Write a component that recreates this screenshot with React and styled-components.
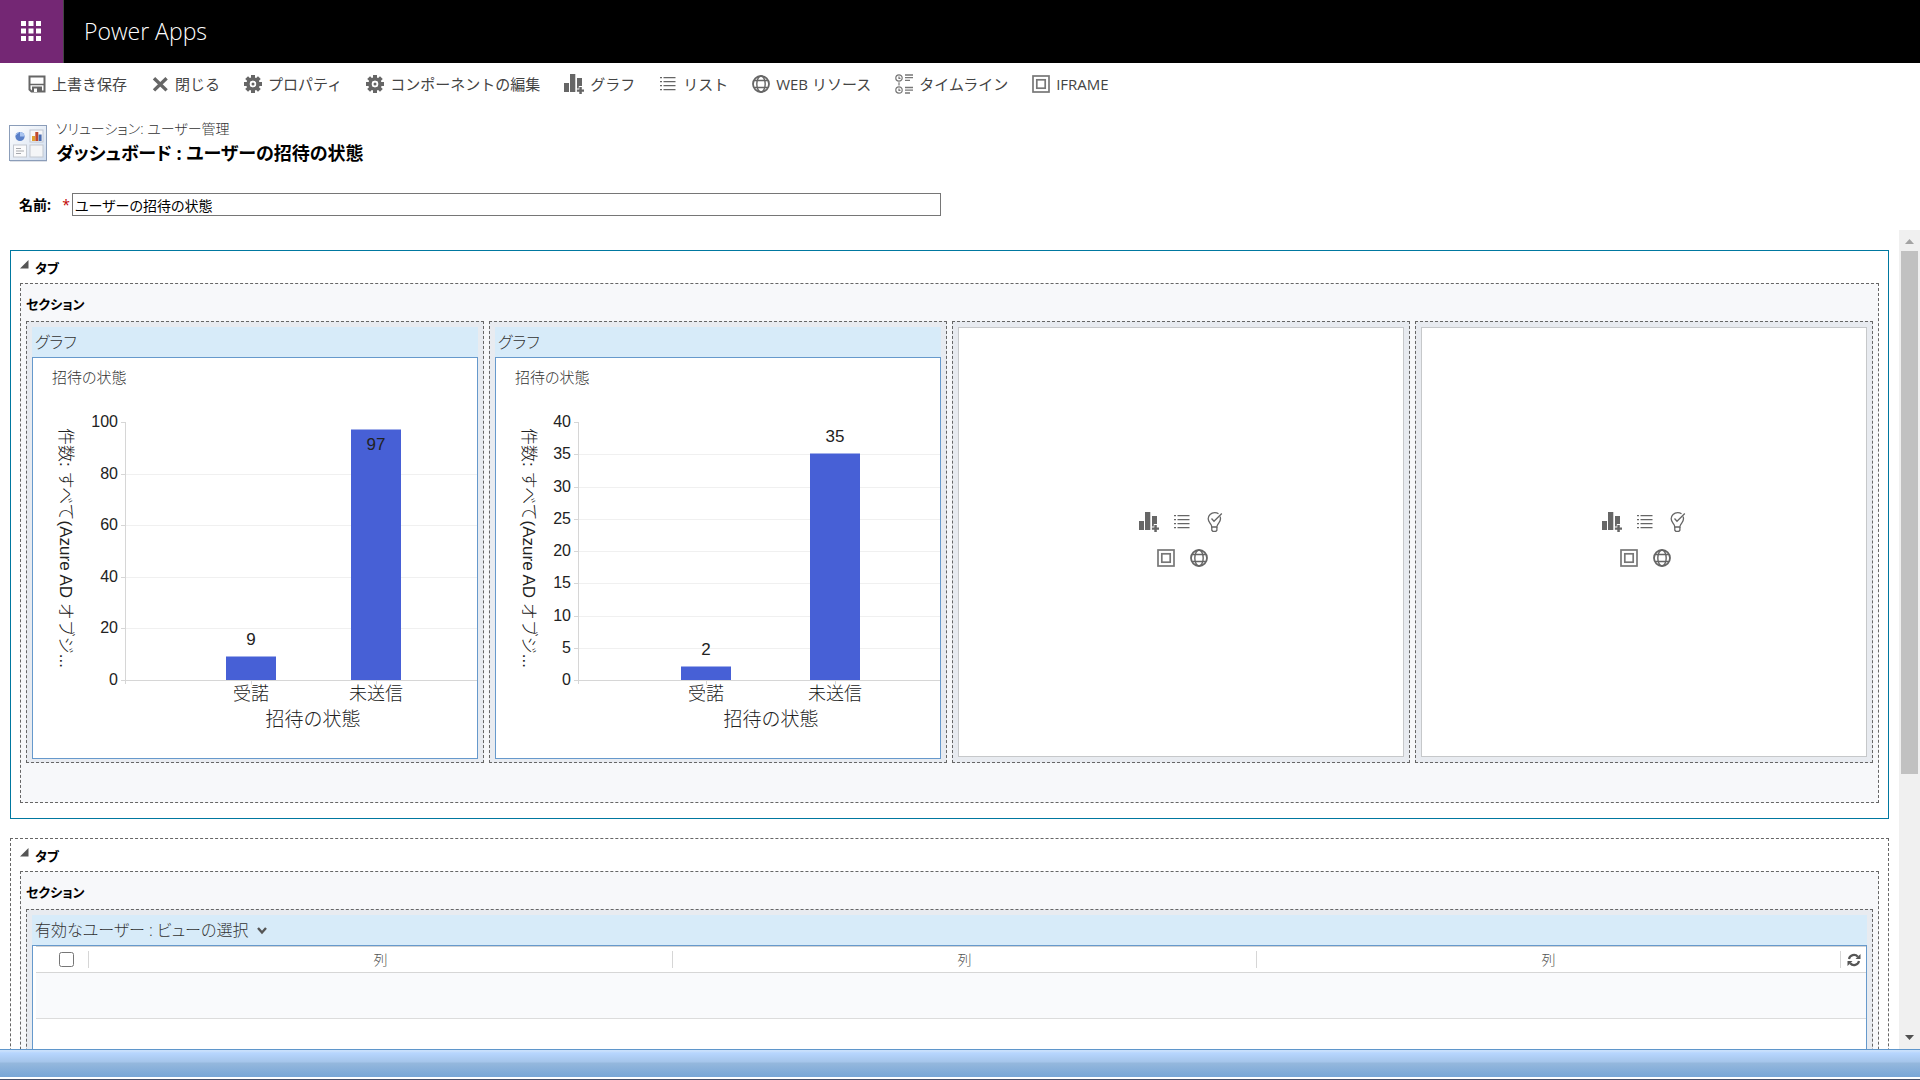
import React from "react";
import styled, { createGlobalStyle, css } from "styled-components";

const GlobalStyle = createGlobalStyle`
  *, *::before, *::after { box-sizing: border-box; }
  body {
    margin: 0;
    background: #fff;
    color: #333;
    font-family: "Open Sans", "Noto Sans CJK JP", sans-serif;
    font-size: 15px;
    line-height: 20px;
  }
  button, input, select { font: inherit; color: inherit; margin: 0; }
  h1, h2, h3, p { margin: 0; font-weight: 400; }
  svg { display: block; flex: none; }
`;

const proportional = css`
  font-feature-settings: "palt";
`;

const Page = styled.div`
  display: flex;
  flex-direction: column;
  height: 100vh;
`;

const Banner = styled.header`
  display: flex;
  align-items: stretch;
  height: 63px;
  background: #000;
`;

const Launcher = styled.button`
  display: flex;
  align-items: center;
  justify-content: center;
  width: 64px;
  padding: 0 1px 2px 0;
  border: 0;
  border-right: 1px solid #444;
  background: #742774;
`;

const BannerTitle = styled.span`
  padding: 0 20px;
  color: #fff;
  font-size: 23px;
  font-weight: 300;
  line-height: 62px;
`;

const Toolbar = styled.nav`
  display: flex;
  align-items: center;
  gap: 24px;
  height: 42px;
  padding: 0 28px;
`;

const Tool = styled.button`
  display: flex;
  align-items: center;
  gap: 6px;
  padding: 0;
  border: 0;
  background: none;
  color: #444;
  font-size: 15px;
  line-height: 20px;
  white-space: nowrap;
`;

const Heading = styled.div`
  display: flex;
  align-items: center;
  gap: 8px;
  padding: 12px 8px 0;
`;

const Breadcrumb = styled.p`
  ${proportional}
  font-size: 14px;
  font-weight: 300;
  line-height: 24px;
`;

const Title = styled.h1`
  ${proportional}
  color: #000;
  font-size: 18px;
  font-weight: 700;
  line-height: 24px;
`;

const NameRow = styled.div`
  display: flex;
  align-items: center;
  padding: 28px 19px 14px;
`;

const NameLabel = styled.label`
  display: flex;
  flex: none;
  justify-content: space-between;
  width: 53px;
  padding-right: 2px;
  color: #000;
  font-size: 14px;
  font-weight: 700;
  line-height: 20px;
  white-space: nowrap;
`;

const Required = styled.span`
  color: #c00000;
  font-weight: 400;
`;

const NameInput = styled.input`
  ${proportional}
  width: 100%;
  max-width: 869px;
  height: 23px;
  padding: 0 2px;
  border: 1px solid #767676;
  background: #fff;
  color: #000;
  font-size: 14px;
`;

const Workspace = styled.div`
  display: flex;
  flex: 1;
  min-height: 0;
`;

const Canvas = styled.main`
  display: flex;
  flex: 1;
  flex-direction: column;
  gap: 19px;
  min-width: 0;
  padding: 20px 10px 0;
  overflow: hidden;
`;

const Tab = styled.section`
  flex: none;
  padding: 0 9px 15px;
  border: 1px ${(p) => (p.$selected ? "solid #0078a0" : "dashed #666")};
`;

const TabHeader = styled.h2`
  ${proportional}
  display: flex;
  align-items: center;
  gap: 6px;
  height: 32px;
  padding-top: 2px;
  color: #000;
  font-size: 13px;
  font-weight: 700;
  line-height: 30px;
`;

const Collapse = styled.svg`
  margin-bottom: 8px;
`;

const Section = styled.div`
  padding: 0 5px 39px;
  border: 1px dashed #666;
  background: #f7f8fa;
`;

const SectionLabel = styled.h3`
  ${proportional}
  height: 37px;
  padding-top: 4px;
  color: #000;
  font-size: 13px;
  font-weight: 700;
  line-height: 32px;
`;

const Cells = styled.div`
  display: grid;
  grid-template-columns: repeat(${(p) => p.$columns}, minmax(0, 1fr));
  gap: 5px;
`;

const Cell = styled.div`
  display: flex;
  flex-direction: column;
  min-height: 442px;
  padding: ${(p) => (p.$empty ? "5px" : "5px 5px 3px")};
  border: 1px dashed #666;
  background: #e8ebf0;
`;

const CellHeader = styled.div`
  ${proportional}
  display: flex;
  align-items: center;
  gap: 8px;
  height: 30px;
  padding: 0 3px;
  background: #d7ebf9;
  color: #333;
  font-size: 16px;
  font-weight: 300;
  line-height: 26px;
`;

const CellBody = styled.div`
  flex: 1;
  border: 1px solid #6699cc;
  background: #fff;
  overflow: hidden;
`;

const ChartTitle = styled.p`
  ${proportional}
  height: 40px;
  padding-left: 19px;
  font-size: 15px;
  font-weight: 300;
  line-height: 38px;
`;

const Plot = styled.svg`
  width: 100%;
  height: auto;
  color: #222;
  font-family: "Liberation Sans", "Noto Sans CJK JP", sans-serif;
  font-size: 16px;
  font-weight: 300;
`;

const Placeholder = styled.div`
  display: flex;
  flex: 1;
  flex-direction: column;
  align-items: center;
  justify-content: center;
  gap: 16px;
  padding: 0 0 4px 2px;
  border: 1px solid #c6c8ca;
  background: #fff;
`;

const IconRow = styled.div`
  display: flex;
  gap: 13px;
`;

const IconButton = styled.button`
  display: flex;
  align-items: center;
  justify-content: center;
  width: 20px;
  height: 20px;
  padding: 0;
  border: 0;
  background: none;
`;

const ViewPicker = styled.select`
  ${proportional}
  height: 26px;
  padding: 0 0 4px;
  border: 0;
  appearance: none;
  background: none;
`;

const Grid = styled.table`
  width: calc(100% - 3px);
  margin-left: 3px;
  border-collapse: separate;
  border-spacing: 0;
  table-layout: fixed;
  border-top: 1px solid #d0d2d4;
`;

const HeadCell = styled.th`
  width: ${(p) => p.$width || "auto"};
  height: 26px;
  padding: 0;
  border-bottom: 1px solid #d6d6d6;
  color: #555;
  font-size: 14px;
  font-weight: 300;
  line-height: 17px;
`;

const HeadContent = styled.div`
  display: flex;
  align-items: center;
  justify-content: center;
  height: 17px;
  padding-left: ${(p) => p.$inset || 0}px;
  border-right: ${(p) => (p.$last ? 0 : 1)}px solid #d6d6d6;
`;

const Check = styled.input`
  width: 15px;
  height: 15px;
`;

const GridCell = styled.td`
  height: 46px;
  border-bottom: 1px solid #dcdcdc;
  background: ${(p) => (p.$shaded ? "#f9fafc" : "#fff")};
`;

const ScrollTrack = styled.div`
  display: flex;
  flex-direction: column;
  align-items: center;
  width: 21px;
  background: #f0f0f0;
`;

const ScrollArrow = styled.svg`
  width: 21px;
  height: 21px;
`;

const ScrollThumb = styled.div`
  width: 17px;
  height: 523px;
  margin-bottom: auto;
  background: #c1c1c1;
`;

const StatusBar = styled.footer`
  flex: none;
  height: 31px;
  border-top: 1px solid #5f96cb;
  border-bottom: 1px solid #46506a;
  background: linear-gradient(
    #c9e0fb 0, #c9e0fb 1px, #b7d6fe 3px, #a5c5ea 12px,
    #95b8dd 13px, #78a6d6 27px, #fff 27px, #fff 29px
  );
`;

/* Icons */

const GREY = "#666";

const Waffle = () => (
  <svg width="20" height="20" viewBox="0 0 20 20" fill="#fff">
    {[0, 7.5, 15].map((y) => [0, 7.5, 15].map((x) => <rect key={x + "-" + y} x={x} y={y} width="5" height="5" />))}
  </svg>
);

const SaveIcon = ({ size = 18 }) => (
  <svg width={size} height={size} viewBox="0 0 18 18" fill="none" stroke={GREY}>
    <path d="M1.5 1.5h15v15h-13l-2-2z" strokeWidth="2" />
    <path d="M2 9.5h14" strokeWidth="1.5" />
    <path d="M4 11.5h10V17H4z" fill={GREY} stroke="none" />
    <path d="M6 13.5h3V17H6z" fill="#fff" stroke="none" />
  </svg>
);

const CloseIcon = ({ size = 18 }) => (
  <svg width={size} height={size} viewBox="0 0 18 18" stroke={GREY} strokeWidth="3.4">
    <path d="M3 3.2 15.6 15.4M15.6 3.2 3 15.4" />
  </svg>
);

const GearIcon = ({ size = 18 }) => (
  <svg width={size} height={size} viewBox="0 0 18 18">
    <g fill={GREY}>
      {[0, 45, 90, 135, 180, 225, 270, 315].map((a) => (
        <rect key={a} x="7" y="0" width="4" height="5" transform={`rotate(${a} 9 9)`} />
      ))}
    </g>
    <circle cx="9" cy="9" r="5" fill="none" stroke={GREY} strokeWidth="3.6" />
    <circle cx="9" cy="9" r="3.2" fill="#fff" />
    <circle cx="9" cy="9" r="1.5" fill={GREY} />
  </svg>
);

const ChartIcon = () => (
  <svg width="20" height="20" viewBox="0 0 20 20" fill={GREY}>
    <path d="M0 9h5v9H0zM6 0h5.3v18H6zM13 4h5v8h-3.2v2.5H13z" />
    <path d="M15.3 13h2.5v2.4h2.4v2.4h-2.4v2.4h-2.5v-2.4h-2.4v-2.4h2.4z" />
  </svg>
);

const ListIcon = ({ size = 18 }) => (
  <svg width={size} height={size} viewBox="0 0 18 18" fill={GREY}>
    {[2, 6, 10, 14].map((y) => (
      <path key={y} d={`M1 ${y}h2v1.3H1zM4.5 ${y}h12v1.3h-12z`} />
    ))}
  </svg>
);

const GlobeIcon = ({ size = 18 }) => (
  <svg width={size} height={size} viewBox="0 0 18 18" fill="none" stroke={GREY} strokeWidth="1.4">
    <circle cx="9" cy="9" r="8" strokeWidth="1.8" />
    <ellipse cx="9" cy="9" rx="4.2" ry="8" />
    <path d="M2 5.5h14M2 12.5h14" />
  </svg>
);

const TimelineIcon = ({ size = 18 }) => (
  <svg width={size} height={size + 2} viewBox="0 0 18 20" fill="none" stroke="#777" strokeWidth="1.2">
    <circle cx="4" cy="4" r="3.2" />
    <circle cx="4" cy="16" r="3.2" />
    <path d="M4 2.5V4.300h1.500M4 14.500v1.800h1.500M4 8.200v3.400" />
    <path d="M10 1h8M10 3.700h8M10 6.400h5M10 13.500h8M10 16.200h8M10 19h5" strokeWidth="1.3" />
  </svg>
);

const FrameIcon = ({ size = 18 }) => (
  <svg width={size} height={size} viewBox="0 0 18 18" fill="none" stroke="#777" strokeWidth="1.7">
    <rect x="1" y="1" width="16" height="16" />
    <rect x="4.800" y="4.800" width="8.400" height="8.400" />
  </svg>
);

const BulbIcon = () => (
  <svg width="16" height="20" viewBox="0 0 16 20" fill="none" stroke={GREY} strokeWidth="1.3">
    <path d="M11.500 1.800C10.400 1 9 .7 7.700.7 4 .7 1.200 3.400 1.200 6.800c0 2.800 1.800 4 2.900 6 .4.700.5 1.300.6 2.200h5.200c.1-.9.300-1.500.7-2.200 1.100-2 2.900-3.200 2.900-6 0-.9-.2-1.700-.5-2.400" />
    <path d="M4.500 6.500 7 9.200 14.800 1.500M4.800 15v3.200l1 1.100h3.100l1-1.100V15" />
  </svg>
);

const DashboardIcon = () => (
  <svg width="40" height="42" viewBox="0 0 40 42">
    <defs>
      <linearGradient id="board" x1="0" y1="0" x2="1" y2="1">
        <stop offset="0" stopColor="#fff" />
        <stop offset="1" stopColor="#cfdcee" />
      </linearGradient>
    </defs>
    <rect x="2" y="40" width="37" height="2" fill="#dfe2e8" />
    <rect x="1.5" y="5.5" width="37" height="35" fill="url(#board)" stroke="#8b9db9" />
    <rect x="22" y="10" width="13" height="12" fill="#f7f7f9" stroke="#bfc6d2" />
    <rect x="5.5" y="25" width="13" height="12" fill="#fbfbfc" stroke="#c3c8d0" />
    <rect x="22" y="25" width="13" height="12" fill="#f4f5f7" stroke="#c3c8d0" />
    <circle cx="12" cy="16.5" r="4.6" fill="#5a80c8" />
    <path d="M12 16.5V11.9a4.6 4.6 0 0 1 4.6 4.6z" fill="#a9c4f0" />
    <path d="M8 15a4 4 0 0 1 3-2.5" stroke="#a9c4f0" fill="none" />
    <path d="M24 16h3v5h-3z" fill="#e0a030" />
    <path d="M27.3 12h3v9h-3z" fill="#c0482c" />
    <path d="M30.6 14.5h3V21h-3z" fill="#4a6cb0" />
    <path d="M8 28.5h5M8 31h8M8 33.5h5" stroke="#a7a9ad" />
  </svg>
);

const RefreshIcon = () => (
  <svg width="14" height="14" viewBox="0 0 14 14" fill="none" stroke="#555" strokeWidth="2.2">
    <path d="M2 6a5 5 0 0 1 8.800-2.200M12 8a5 5 0 0 1-8.800 2.200" />
    <path d="M13.500 1v5h-5zM.5 13V8h5z" fill="#555" stroke="none" />
  </svg>
);

const ChevronIcon = () => (
  <svg width="10" height="9" viewBox="0 0 10 9" fill="none" stroke="#555" strokeWidth="2.4">
    <path d="M1 2l4 4.500L9 2" />
  </svg>
);

/* Data */

const tools = [
  ["上書き保存", SaveIcon],
  ["閉じる", CloseIcon],
  ["プロパティ", GearIcon],
  ["コンポーネントの編集", GearIcon],
  ["グラフ", ChartIcon],
  ["リスト", ListIcon],
  ["WEB リソース", GlobeIcon],
  ["タイムライン", TimelineIcon],
  ["IFRAME", FrameIcon],
];

const charts = [
  {
    axis: 92, max: 100, step: 20, titleX: 280,
    bars: [{ name: "受諾", value: 9, x: 218 }, { name: "未送信", value: 97, x: 343, inside: true }],
  },
  {
    axis: 82, max: 40, step: 5, titleX: 275,
    bars: [{ name: "受諾", value: 2, x: 210 }, { name: "未送信", value: 35, x: 339 }],
  },
];

const TOP = 24;
const BASE = 282;

function BarChart({ axis, max, step, titleX, bars }) {
  const y = (v) => Math.round(BASE - ((BASE - TOP) * v) / max) + 0.5;
  const marks = [];
  for (let v = 0; v <= max; v += step) marks.push(v);
  return (
    <Plot viewBox="0 0 444 360" fill="currentColor" role="img" aria-label="招待の状態">
      {marks.map((v) => (
        <g key={v}>
          {v > 0 && v < max && <path d={`M${axis} ${y(v)}H444`} stroke="#f0f0f0" />}
          <path d={`M${axis - 4} ${y(v)}h4`} stroke="#d6d6d6" />
          <text x={axis - 7} y={y(v) + 4} textAnchor="end">{v}</text>
        </g>
      ))}
      {bars.map((b) => (
        <g key={b.name}>
          <rect x={b.x - 25} y={y(b.value) - 1} width="50" height={y(0) - y(b.value) + 1} fill="#4760d6" />
          <path d={`M${b.x + 0.5} ${y(0)}v4`} stroke="#d6d6d6" />
          <text x={b.x} y={y(b.value) + (b.inside ? 19 : -13)} fontSize="17" textAnchor="middle">{b.value}</text>
          <text x={b.x} y={y(0) + 19} fontSize="18" textAnchor="middle">{b.name}</text>
        </g>
      ))}
      <path d={`M${axis + 0.5} ${TOP}V${BASE + 4}M${axis} ${y(0)}H444`} stroke="#d6d6d6" fill="none" />
      <text x={titleX} y="328" fontSize="19" textAnchor="middle">招待の状態</text>
      <text transform="translate(27 30) rotate(90)" fontSize="17">件数: すべて(Azure AD オブジ...</text>
    </Plot>
  );
}

function ChartCell({ chart }) {
  return (
    <Cell>
      <CellHeader>グラフ</CellHeader>
      <CellBody>
        <ChartTitle>招待の状態</ChartTitle>
        <BarChart {...chart} />
      </CellBody>
    </Cell>
  );
}

function EmptyCell() {
  return (
    <Cell $empty>
      <Placeholder>
        <IconRow>
          <IconButton aria-label="グラフ"><ChartIcon /></IconButton>
          <IconButton aria-label="リスト"><ListIcon /></IconButton>
          <IconButton aria-label="アシスタント"><BulbIcon /></IconButton>
        </IconRow>
        <IconRow>
          <IconButton aria-label="IFRAME"><FrameIcon /></IconButton>
          <IconButton aria-label="WEB リソース"><GlobeIcon /></IconButton>
        </IconRow>
      </Placeholder>
    </Cell>
  );
}

function TabPanel({ selected, columns, children }) {
  return (
    <Tab $selected={selected}>
      <TabHeader>
        <Collapse width="9" height="9" viewBox="0 0 9 9"><path d="M8.500 0v8.500H0z" fill="#555" /></Collapse>
        タブ
      </TabHeader>
      <Section>
        <SectionLabel>セクション</SectionLabel>
        <Cells $columns={columns}>{children}</Cells>
      </Section>
    </Tab>
  );
}

function ListCell() {
  return (
    <Cell>
      <CellHeader>
        <ViewPicker aria-label="ビューの選択">
          <option>有効なユーザー : ビューの選択</option>
        </ViewPicker>
        <ChevronIcon />
      </CellHeader>
      <CellBody>
        <Grid>
          <thead>
            <tr>
              <HeadCell $width="53px">
                <HeadContent $inset={9}><Check type="checkbox" aria-label="すべて選択" /></HeadContent>
              </HeadCell>
              <HeadCell><HeadContent>列</HeadContent></HeadCell>
              <HeadCell><HeadContent>列</HeadContent></HeadCell>
              <HeadCell><HeadContent>列</HeadContent></HeadCell>
              <HeadCell $width="25px">
                <HeadContent $last><IconButton aria-label="更新"><RefreshIcon /></IconButton></HeadContent>
              </HeadCell>
            </tr>
          </thead>
          <tbody>
            <tr><GridCell colSpan={5} $shaded /></tr>
            <tr><GridCell colSpan={5} /></tr>
          </tbody>
        </Grid>
      </CellBody>
    </Cell>
  );
}

export default function App() {
  return (
    <>
      <GlobalStyle />
      <Page>
        <Banner>
          <Launcher aria-label="アプリ起動ツール"><Waffle /></Launcher>
          <BannerTitle>Power Apps</BannerTitle>
        </Banner>
        <Toolbar>
          {tools.map(([name, Icon]) => (
            <Tool key={name}><Icon />{name}</Tool>
          ))}
        </Toolbar>
        <Heading>
          <DashboardIcon />
          <div>
            <Breadcrumb>ソリューション: ユーザー管理</Breadcrumb>
            <Title>ダッシュボード : ユーザーの招待の状態</Title>
          </div>
        </Heading>
        <NameRow>
          <NameLabel htmlFor="name">名前: <Required>*</Required></NameLabel>
          <NameInput id="name" defaultValue="ユーザーの招待の状態" />
        </NameRow>
        <Workspace>
          <Canvas>
            <TabPanel selected columns={4}>
              {charts.map((chart) => <ChartCell key={chart.max} chart={chart} />)}
              <EmptyCell />
              <EmptyCell />
            </TabPanel>
            <TabPanel columns={1}>
              <ListCell />
            </TabPanel>
          </Canvas>
          <ScrollTrack>
            <ScrollArrow viewBox="0 0 21 21"><path d="M6 14h9l-4.500-5z" fill="#a3a3a3" /></ScrollArrow>
            <ScrollThumb />
            <ScrollArrow viewBox="0 0 21 21"><path d="M6 7h9l-4.500 5z" fill="#505050" /></ScrollArrow>
          </ScrollTrack>
        </Workspace>
        <StatusBar />
      </Page>
    </>
  );
}
